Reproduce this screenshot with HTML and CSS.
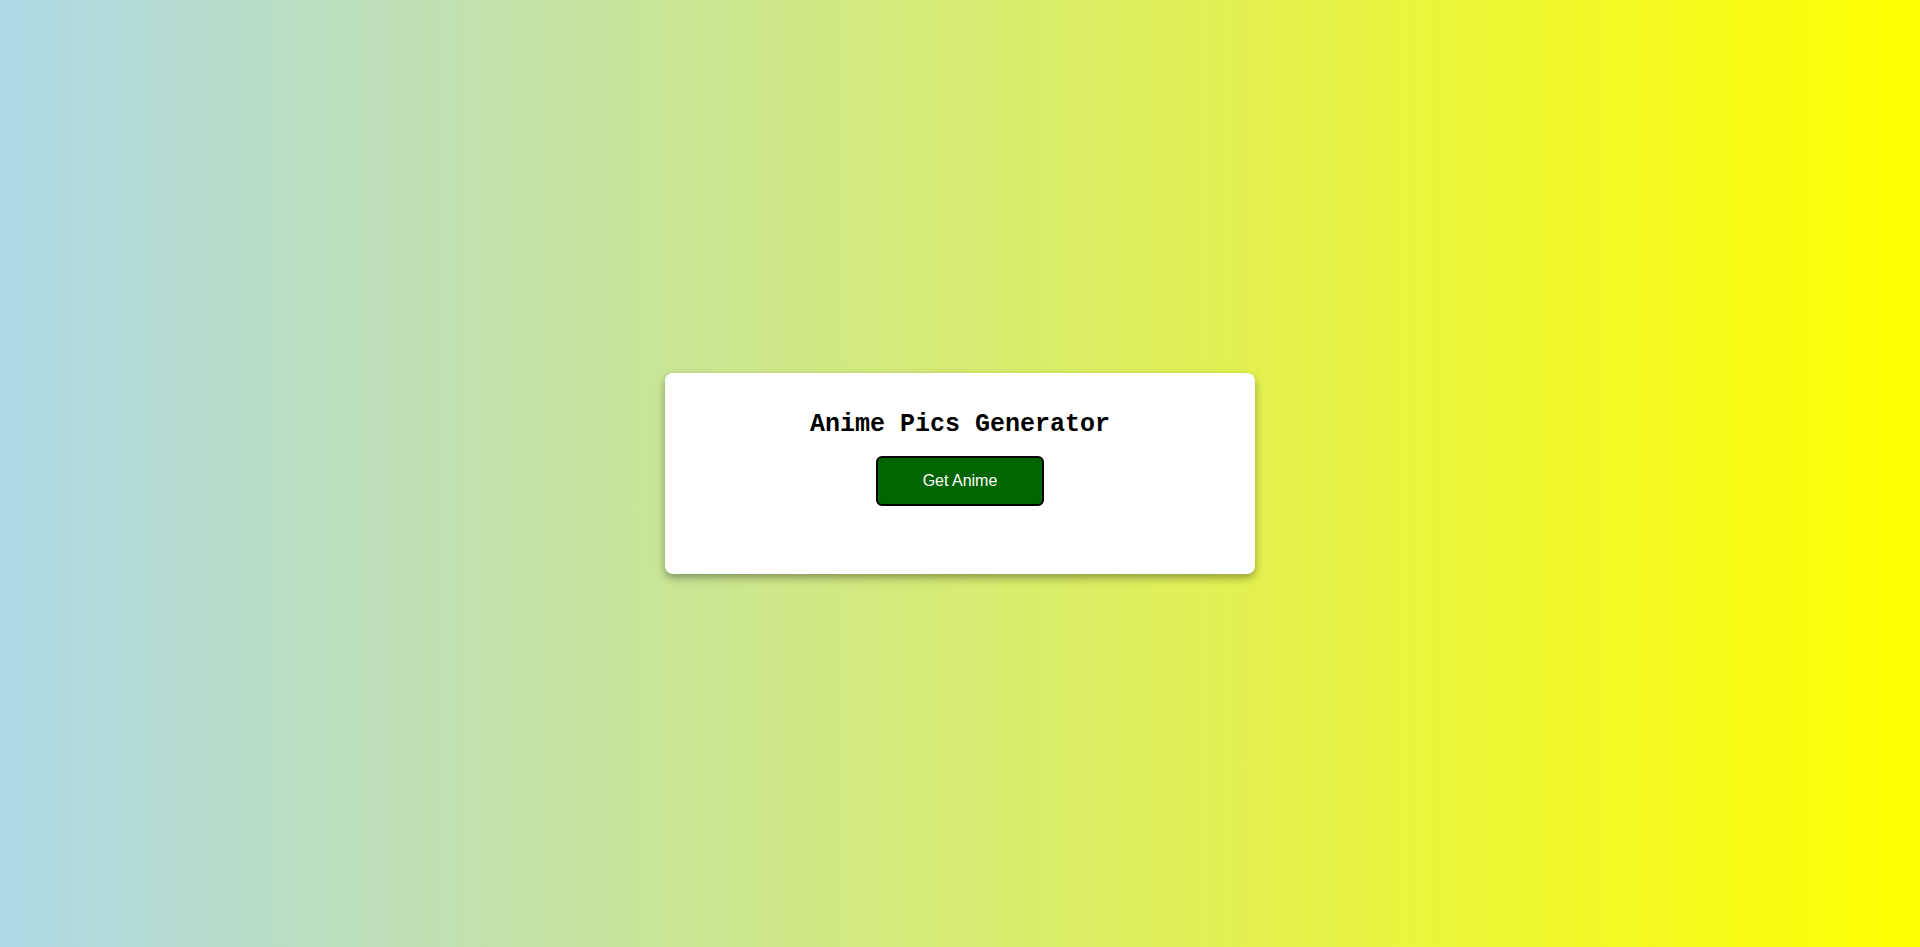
FILE: index.html
```html
<!DOCTYPE html>
<html lang="en">
<head>
<meta charset="UTF-8">
<title>Anime Pics Generator</title>
<link rel="stylesheet" href="styles.css">
</head>
<body>
  <div class="container">
    <h1 class="title">Anime Pics Generator</h1>
    <button class="btn">Get Anime</button>
    <div class="gallery"></div>
  </div>
</body>
</html>
```
FILE: styles.css
```css
html, body {
  margin: 0;
  padding: 0;
}
body {
  min-height: 100vh;
  display: flex;
  align-items: center;
  justify-content: center;
  background: linear-gradient(to right, #add8e6, #ffff00);
  font-family: "Liberation Sans", Arial, sans-serif;
}
.container {
  box-sizing: border-box;
  width: 590px;
  height: 201px;
  background: #fff;
  border-radius: 8px;
  box-shadow: 0 4px 8px rgba(0, 0, 0, 0.35);
  padding: 37px 20px 0;
  display: flex;
  flex-direction: column;
  align-items: center;
  margin-top: -1px;
}
.title {
  margin: 0;
  font-family: "Liberation Mono", "Courier New", monospace;
  font-weight: bold;
  font-size: 25px;
  line-height: 30px;
  color: #000;
}
.btn {
  margin-top: 16px;
  box-sizing: border-box;
  width: 168px;
  height: 50px;
  background: #006400;
  color: #fff;
  border: 2px solid #000;
  border-radius: 6px;
  font-family: "Liberation Sans", Arial, sans-serif;
  font-size: 16px;
  cursor: pointer;
}
```
